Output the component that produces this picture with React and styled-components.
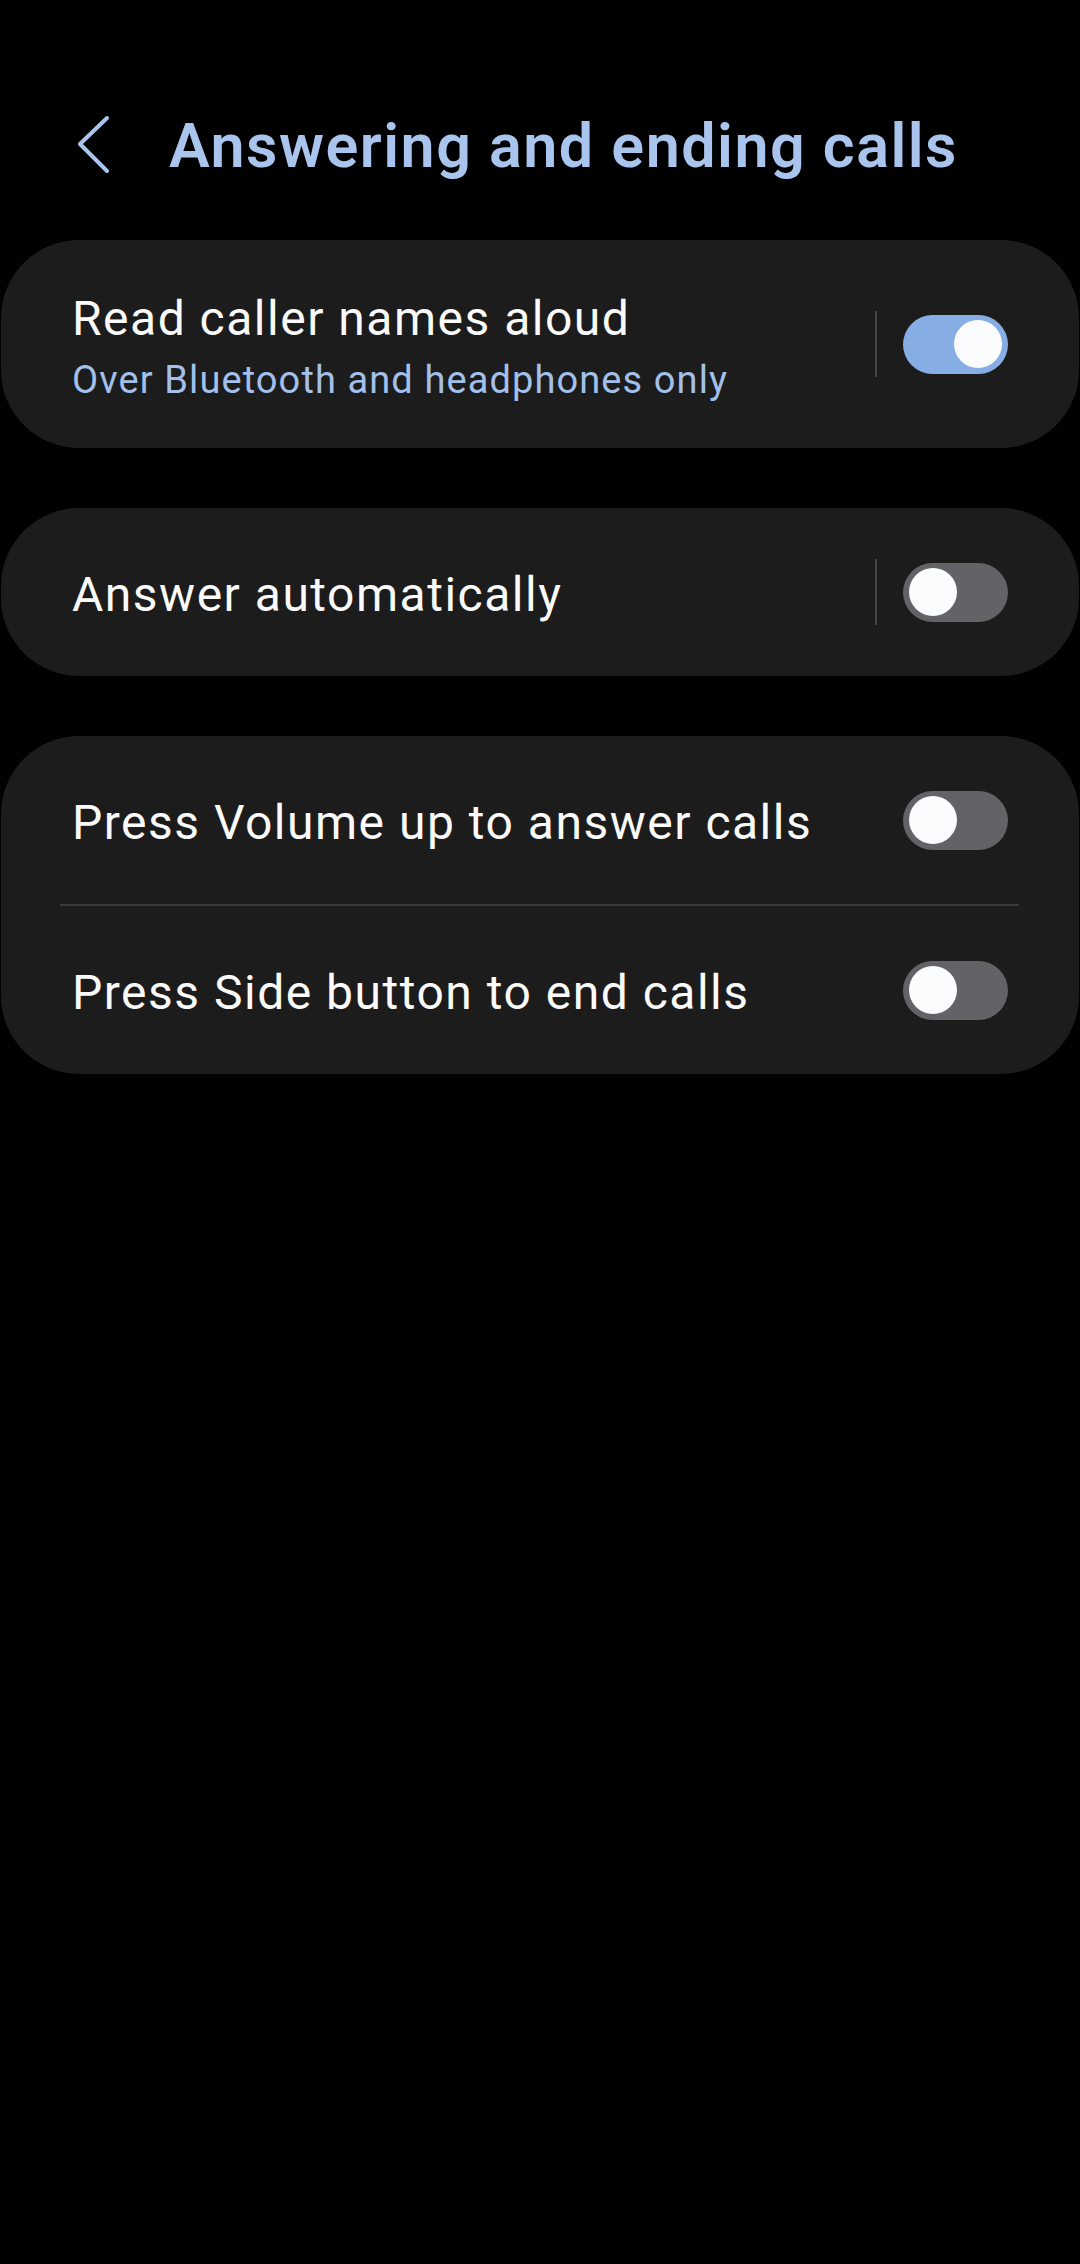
import React from "react";
import styled, { createGlobalStyle } from "styled-components";

const Global = createGlobalStyle`
  html, body { margin: 0; padding: 0; background: #000; }
  body { font-family: Roboto, "Noto Sans", "Liberation Sans", sans-serif; -webkit-font-smoothing: antialiased; }
  * { box-sizing: border-box; }
`;

const Page = styled.div`
  width: 1080px;
  min-height: 2264px;
  background: #000;
  padding: 104px 1px 0;
  display: flex;
  flex-direction: column;
`;

const Header = styled.header`
  height: 80px;
  display: flex;
  align-items: center;
  padding-left: 75px;
  margin-bottom: 56px;
`;

const BackButton = styled.button`
  width: 36px;
  height: 60px;
  padding: 0;
  border: 0;
  background: none;
  display: flex;
  align-items: center;
  justify-content: flex-start;
  margin-right: 57px;
`;

const Title = styled.h1`
  margin: 0;
  padding-top: 3px;
  font-size: 61px;
  line-height: 72px;
  font-weight: 600;
  color: #a9c5ee;
  letter-spacing: 1.5px;
`;

const List = styled.div`
  display: flex;
  flex-direction: column;
  gap: 60px;
`;

const Card = styled.section`
  background: #1c1c1c;
  border-radius: 78px;
  display: flex;
  flex-direction: column;
`;

const Row = styled.div`
  display: flex;
  align-items: center;
  padding: ${(p) => (p.$tall ? "51px 71px 43px 71px" : "0 71px")};
  min-height: ${(p) => (p.$tall ? "208px" : "168px")};
`;

const TextCol = styled.div`
  flex: 1;
  display: flex;
  flex-direction: column;
  gap: 8px;
  padding-top: ${(p) => (p.$nudge ? "5px" : "0")};
`;

const RowTitle = styled.div`
  font-size: 48px;
  line-height: 56px;
  color: #fafafa;
  font-weight: 400;
  letter-spacing: 1.5px;
`;

const RowSub = styled.div`
  font-size: 38px;
  line-height: 50px;
  color: #a3c0ea;
  letter-spacing: 1.1px;
`;

const Controls = styled.div`
  display: flex;
  align-items: center;
  margin-bottom: ${(p) => (p.$raise ? "8px" : "0")};
`;

const VDivider = styled.div`
  width: 2px;
  height: 66px;
  background: #464646;
  margin-right: 26px;
`;

const Track = styled.div`
  width: 105px;
  height: 59px;
  border-radius: 30px;
  background: ${(p) => (p.$on ? "#86aee4" : "#636267")};
  position: relative;
  flex-shrink: 0;
`;

const Thumb = styled.div`
  position: absolute;
  top: 5.5px;
  left: ${(p) => (p.$on ? "51px" : "6px")};
  width: 48px;
  height: 48px;
  border-radius: 50%;
  background: #fbfcfd;
`;

const Separator = styled.div`
  height: 2px;
  background: #3a3a3a;
  margin: 0 60px 0 59px;
`;

const Toggle = ({ on }) => (
  <Track $on={on}>
    <Thumb $on={on} />
  </Track>
);

const Chevron = () => (
  <svg width="36" height="60" viewBox="0 0 36 60">
    <polyline
      points="31,4 4,30 31,57"
      fill="none"
      stroke="#a9c5ee"
      strokeWidth="4"
      strokeLinecap="round"
      strokeLinejoin="round"
    />
  </svg>
);

export default function App() {
  return (
    <>
      <Global />
      <Page>
        <Header>
          <BackButton aria-label="Back">
            <Chevron />
          </BackButton>
          <Title>Answering and ending calls</Title>
        </Header>
        <List>
          <Card>
            <Row $tall>
              <TextCol>
                <RowTitle>Read caller names aloud</RowTitle>
                <RowSub>Over Bluetooth and headphones only</RowSub>
              </TextCol>
              <Controls $raise>
                <VDivider />
                <Toggle on />
              </Controls>
            </Row>
          </Card>
          <Card>
            <Row>
              <TextCol $nudge>
                <RowTitle>Answer automatically</RowTitle>
              </TextCol>
              <Controls>
                <VDivider />
                <Toggle />
              </Controls>
            </Row>
          </Card>
          <Card>
            <Row>
              <TextCol $nudge>
                <RowTitle>Press Volume up to answer calls</RowTitle>
              </TextCol>
              <Controls>
                <Toggle />
              </Controls>
            </Row>
            <Separator />
            <Row>
              <TextCol $nudge>
                <RowTitle>Press Side button to end calls</RowTitle>
              </TextCol>
              <Controls>
                <Toggle />
              </Controls>
            </Row>
          </Card>
        </List>
      </Page>
    </>
  );
}
